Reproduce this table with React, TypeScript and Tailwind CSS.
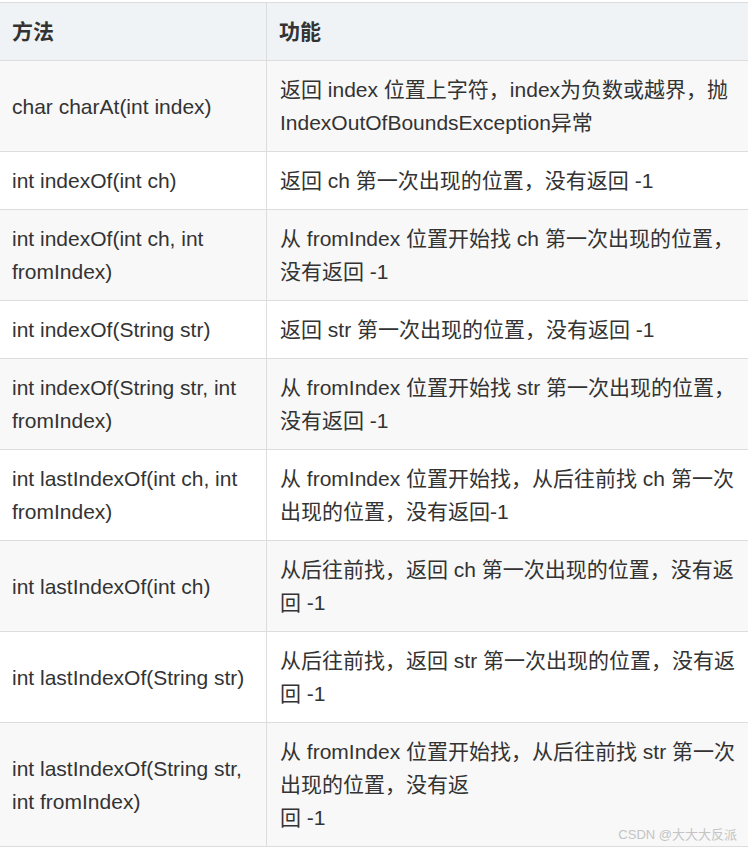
import React from "react";

const rows: { m: string[]; d: string[] }[] = [
  { m: ["char charAt(int index)"], d: ["返回 index 位置上字符，index为负数或越界，抛", "IndexOutOfBoundsException异常"] },
  { m: ["int indexOf(int ch)"], d: ["返回 ch 第一次出现的位置，没有返回 -1"] },
  { m: ["int indexOf(int ch, int", "fromIndex)"], d: ["从 fromIndex 位置开始找 ch 第一次出现的位置，", "没有返回 -1"] },
  { m: ["int indexOf(String str)"], d: ["返回 str 第一次出现的位置，没有返回 -1"] },
  { m: ["int indexOf(String str, int", "fromIndex)"], d: ["从 fromIndex 位置开始找 str 第一次出现的位置，", "没有返回 -1"] },
  { m: ["int lastIndexOf(int ch, int", "fromIndex)"], d: ["从 fromIndex 位置开始找，从后往前找 ch 第一次", "出现的位置，没有返回-1"] },
  { m: ["int lastIndexOf(int ch)"], d: ["从后往前找，返回 ch 第一次出现的位置，没有返", "回 -1"] },
  { m: ["int lastIndexOf(String str)"], d: ["从后往前找，返回 str 第一次出现的位置，没有返", "回 -1"] },
  { m: ["int lastIndexOf(String str,", "int fromIndex)"], d: ["从 fromIndex 位置开始找，从后往前找 str 第一次", "出现的位置，没有返", "回 -1"] },
];

function Lines({ lines }: { lines: string[] }) {
  return (
    <div>
      {lines.map((l, i) => (
        <div key={i} className="whitespace-nowrap">
          {l}
        </div>
      ))}
    </div>
  );
}

export default function App() {
  return (
    <div
      className="w-[748px] h-[848px] bg-white overflow-hidden pt-[2px] text-[21px] leading-[33px] text-[#333333]"
      style={{ fontFamily: '"Liberation Sans", "Noto Sans CJK SC", sans-serif' }}
    >
      <div className="border-t border-[#dddddd]">
        <div className="flex bg-[#eff3f5] border-b border-[#dddddd] font-bold">
          <div className="w-[267px] shrink-0 border-r border-[#dddddd] px-[12px] py-[12px]">方法</div>
          <div className="flex-1 px-[12px] py-[12px]">功能</div>
        </div>
        {rows.map((r, i) => (
          <div
            key={i}
            className={`relative flex border-b border-[#dddddd] ${i % 2 === 0 ? "bg-[#f8f8f8]" : "bg-white"}`}
          >
            <div className="w-[267px] shrink-0 border-r border-[#dddddd] px-[12px] py-[12px] flex items-center">
              <Lines lines={r.m} />
            </div>
            <div className="flex-1 px-[13px] py-[12px] flex items-center">
              <Lines lines={r.d} />
            </div>
            {i === rows.length - 1 && (
              <div className="absolute right-[11px] bottom-[3px] text-[13px] leading-[16px] text-[#c4c4c4] whitespace-nowrap">
                CSDN @大大大反派
              </div>
            )}
          </div>
        ))}
      </div>
    </div>
  );
}
